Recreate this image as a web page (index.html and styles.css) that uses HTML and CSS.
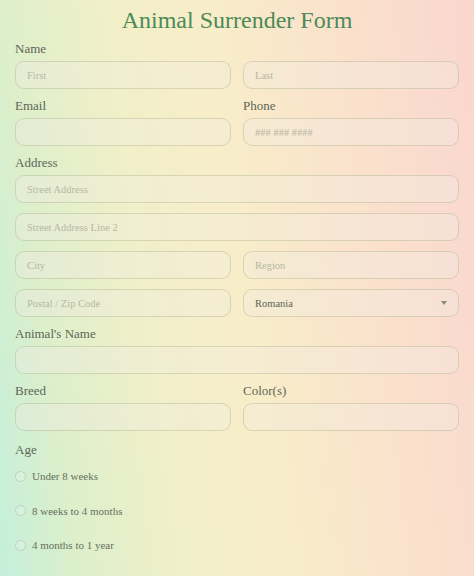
FILE: index.html
```html
<!DOCTYPE html>
<html lang="en">

<head>
    <meta charset="UTF-8">
    <title>Animal Surrender Form</title>
    <link rel="stylesheet" href="styles.css">
</head>

<body>
    <form class="form">
        <h1 class="title">Animal Surrender Form</h1>

        <div class="field">
            <label class="label">Name</label>
            <div class="row">
                <input class="input" type="text" placeholder="First">
                <input class="input" type="text" placeholder="Last">
            </div>
        </div>

        <div class="row">
            <div class="field">
                <label class="label">Email</label>
                <input class="input" type="email">
            </div>
            <div class="field">
                <label class="label">Phone</label>
                <input class="input" type="tel" placeholder="### ### ####">
            </div>
        </div>

        <div class="field">
            <label class="label">Address</label>
            <div class="stack">
                <input class="input" type="text" placeholder="Street Address">
                <input class="input" type="text" placeholder="Street Address Line 2">
                <div class="row">
                    <input class="input" type="text" placeholder="City">
                    <input class="input" type="text" placeholder="Region">
                </div>
                <div class="row">
                    <input class="input" type="text" placeholder="Postal / Zip Code">
                    <div class="select-wrap">
                        <select class="input select">
                            <option>Romania</option>
                        </select>
                        <span class="caret"></span>
                    </div>
                </div>
            </div>
        </div>

        <div class="field">
            <label class="label">Animal's Name</label>
            <input class="input" type="text">
        </div>

        <div class="row">
            <div class="field">
                <label class="label">Breed</label>
                <input class="input" type="text">
            </div>
            <div class="field">
                <label class="label">Color(s)</label>
                <input class="input" type="text">
            </div>
        </div>

        <div class="field">
            <label class="label age-label">Age</label>
            <div class="radios">
                <label class="radio"><input type="radio" name="age"><span>Under 8 weeks</span></label>
                <label class="radio"><input type="radio" name="age"><span>8 weeks to 4 months</span></label>
                <label class="radio"><input type="radio" name="age"><span>4 months to 1 year</span></label>
            </div>
        </div>
    </form>
</body>

</html>
```

FILE: styles.css
```css
html {
    min-height: 100%;
    background: linear-gradient(82deg, #c4efdb 0%, #dcefcb 14%, #f1f0c8 33%, #f8edc9 52%, #fae2cc 74%, #fad6cf 100%);
}

body {
    font-family: "Liberation Serif", "Times New Roman", serif;
    margin: 0;
    padding: 0 15px;
    color: #5d6658;
}

.title {
    margin: 0 0 7px;
    padding-top: 6px;
    text-align: center;
    font-size: 24px;
    font-weight: normal;
    color: #4c8a58;
    line-height: 28px;
}

.field {
    display: flex;
    flex-direction: column;
    min-width: 0;
    margin-bottom: 9px;
}

.row {
    display: grid;
    grid-template-columns: 1fr 1fr;
    gap: 12px;
}

.stack {
    display: flex;
    flex-direction: column;
    gap: 10px;
}

.label {
    font-size: 13px;
    line-height: 16px;
    margin-bottom: 4px;
}

.input {
    box-sizing: border-box;
    width: 100%;
    height: 28px;
    margin: 0;
    padding: 0 11px;
    border: 1px solid rgba(160, 165, 130, 0.35);
    border-radius: 9px;
    background: rgba(240, 235, 225, 0.35);
    font-family: inherit;
    font-size: 10.5px;
    color: #5d6658;
    outline: none;
}

.input::placeholder {
    color: #b6b8a4;
}

.select-wrap {
    position: relative;
}

.select {
    appearance: none;
    -webkit-appearance: none;
}

.caret {
    position: absolute;
    right: 12px;
    top: 12px;
    border-left: 3px solid transparent;
    border-right: 3px solid transparent;
    border-top: 4px solid #8a8a80;
}

.age-label {
    margin-top: 2px;
    margin-bottom: 10px;
}

.radios {
    display: flex;
    flex-direction: column;
    gap: 18.5px;
}

.radio {
    display: flex;
    align-items: center;
    gap: 6px;
    font-size: 11px;
    line-height: 16px;
    color: #66705f;
}

.radio input {
    appearance: none;
    -webkit-appearance: none;
    box-sizing: border-box;
    width: 11px;
    height: 11px;
    margin: 0;
    border: 1px solid #c2cfbf;
    border-radius: 50%;
    background: rgba(255, 255, 255, 0.2);
}
```
